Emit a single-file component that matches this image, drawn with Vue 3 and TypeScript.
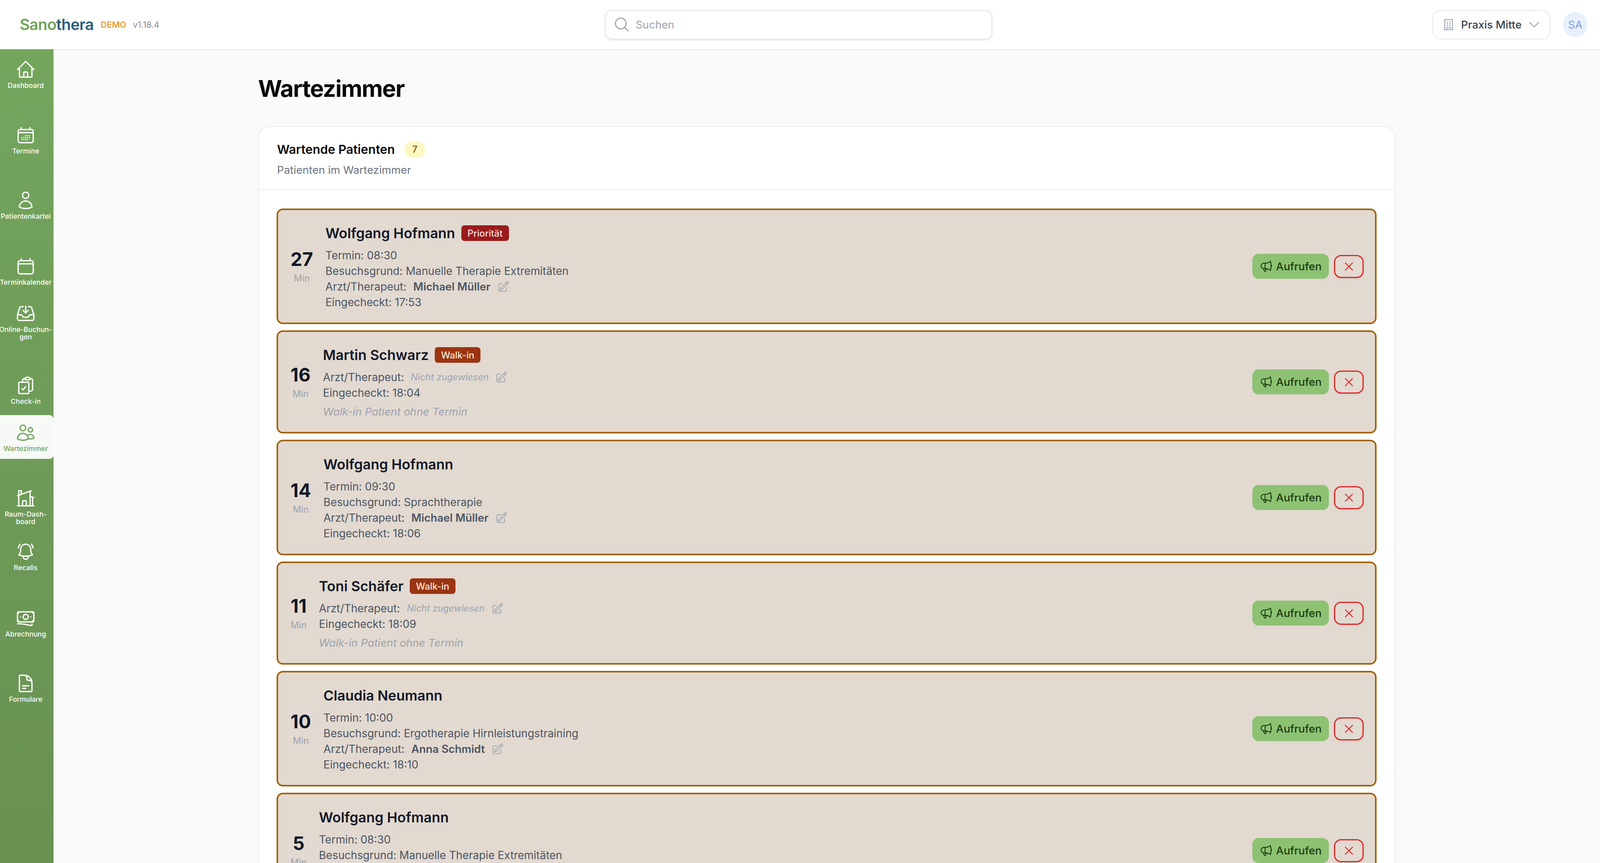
<template>
  <div class="app">
    <header class="topbar">
      <div class="brand">
        <span class="logo"><span class="logo-a">Sano</span><span class="logo-b">thera</span></span>
        <span class="demo">DEMO</span>
        <span class="version">v1.18.4</span>
      </div>
      <div class="search-wrap">
        <div class="search">
          <svg class="search-icon" viewBox="0 0 24 24" fill="none" stroke="currentColor" stroke-width="1.5" stroke-linecap="round" stroke-linejoin="round">
            <path :d="icons.search" />
          </svg>
          <span>Suchen</span>
        </div>
      </div>
      <div class="top-right">
        <div class="location">
          <svg class="loc-icon" viewBox="0 0 24 24" fill="none" stroke="currentColor" stroke-width="1.5" stroke-linecap="round" stroke-linejoin="round">
            <path :d="icons.building" />
          </svg>
          <span class="loc-name">Praxis Mitte</span>
          <svg class="chev-icon" viewBox="0 0 24 24" fill="none" stroke="currentColor" stroke-width="1.5" stroke-linecap="round" stroke-linejoin="round">
            <path :d="icons.chevron" />
          </svg>
        </div>
        <div class="avatar">SA</div>
      </div>
    </header>

    <div class="body-row">
      <nav class="sidebar">
        <div v-for="item in navItems" :key="item.label" class="nav-slot" :style="{ height: item.slot + 'px' }">
          <a class="nav-item" :class="{ active: item.active }">
            <svg class="nav-icon" viewBox="0 0 24 24" fill="none" stroke="currentColor" stroke-width="1.5" stroke-linecap="round" stroke-linejoin="round">
              <path :d="item.icon" />
            </svg>
            <span class="nav-label">{{ item.label }}</span>
          </a>
        </div>
      </nav>

      <main class="main">
        <div class="page">
          <h1>Wartezimmer</h1>
          <section class="panel">
            <div class="panel-head">
              <div class="panel-title">
                <h2>Wartende Patienten</h2>
                <span class="count">7</span>
              </div>
              <p>Patienten im Wartezimmer</p>
            </div>
            <div class="panel-body">
              <article v-for="(p, i) in patients" :key="i" class="patient">
                <div class="wait">
                  <strong>{{ p.wait }}</strong>
                  <span>Min</span>
                </div>
                <div class="info">
                  <div class="name-row">
                    <span class="name">{{ p.name }}</span>
                    <span v-if="p.badge" class="badge" :class="p.badge === 'Walk-in' ? 'walkin' : 'prio'">{{ p.badge }}</span>
                  </div>
                  <div v-if="p.termin" class="line">Termin: {{ p.termin }}</div>
                  <div v-if="p.reason" class="line">Besuchsgrund: {{ p.reason }}</div>
                  <div class="line doctor">
                    <span>Arzt/Therapeut:</span>
                    <span v-if="p.doctor" class="doc-name">{{ p.doctor }}</span>
                    <span v-else class="doc-none">Nicht zugewiesen</span>
                    <svg class="edit-icon" viewBox="0 0 24 24" fill="none" stroke="currentColor" stroke-width="1.5" stroke-linecap="round" stroke-linejoin="round">
                      <path :d="icons.edit" />
                    </svg>
                  </div>
                  <div class="line">Eingecheckt: {{ p.checkin }}</div>
                  <div v-if="!p.termin" class="note">Walk-in Patient ohne Termin</div>
                </div>
                <div class="actions">
                  <button class="call">
                    <svg class="call-icon" viewBox="0 0 24 24" fill="none" stroke="currentColor" stroke-width="1.5" stroke-linecap="round" stroke-linejoin="round">
                      <path :d="icons.megaphone" />
                    </svg>
                    Aufrufen
                  </button>
                  <button class="remove">
                    <svg class="x-icon" viewBox="0 0 24 24" fill="none" stroke="currentColor" stroke-width="1.5" stroke-linecap="round" stroke-linejoin="round">
                      <path :d="icons.close" />
                    </svg>
                  </button>
                </div>
              </article>
            </div>
          </section>
        </div>
      </main>
    </div>
  </div>
</template>

<script setup lang="ts">
const icons = {
  search: "M21 21l-5.197-5.197m0 0A7.5 7.5 0 105.196 5.196a7.5 7.5 0 0010.607 10.607z",
  building:
    "M3.75 21h16.5M4.5 3h15M5.25 3v18m13.5-18v18M9 6.75h1.5m-1.5 3h1.5m-1.5 3h1.5m3-6H15m-1.5 3H15m-1.5 3H15M9 21v-3.375c0-.621.504-1.125 1.125-1.125h3.75c.621 0 1.125.504 1.125 1.125V21",
  chevron: "M19.5 8.25l-7.5 7.5-7.5-7.5",
  edit: "M16.862 4.487l1.687-1.688a1.875 1.875 0 112.652 2.652L10.582 16.07a4.5 4.5 0 01-1.897 1.13L6 18l.8-2.685a4.5 4.5 0 011.13-1.897l8.932-8.931zm0 0L19.5 7.125M18 14v4.75A2.25 2.25 0 0115.75 21H5.25A2.25 2.25 0 013 18.75V8.25A2.25 2.25 0 015.25 6H10",
  megaphone:
    "M10.34 15.84c-.688-.06-1.386-.09-2.09-.09H7.5a4.5 4.5 0 110-9h.75c.704 0 1.402-.03 2.09-.09m0 9.18c.253.962.584 1.892.985 2.783.247.55.06 1.21-.463 1.511l-.657.38c-.551.318-1.26.117-1.527-.461a20.845 20.845 0 01-1.44-4.282m3.102.069a18.03 18.03 0 01-.59-4.59c0-1.586.205-3.124.59-4.59m0 9.18a23.848 23.848 0 018.835 2.535M10.34 6.66a23.847 23.847 0 008.835-2.535m0 0A23.74 23.74 0 0018.795 3m.38 1.125a23.91 23.91 0 011.014 5.395m-1.014 8.855c-.118.38-.245.754-.38 1.125m.38-1.125a23.91 23.91 0 001.014-5.395m0-3.46c.495.413.811 1.035.811 1.73 0 .695-.316 1.317-.811 1.73m0-3.46a24.347 24.347 0 010 3.46",
  close: "M6 18L18 6M6 6l12 12",
};

const navItems = [
  { label: "Dashboard", slot: 168, icon: "M2.25 12l8.954-8.955c.44-.439 1.152-.439 1.591 0L21.75 12M4.5 9.75v10.125c0 .621.504 1.125 1.125 1.125H9.75v-4.875c0-.621.504-1.125 1.125-1.125h2.25c.621 0 1.125.504 1.125 1.125V21h4.125c.621 0 1.125-.504 1.125-1.125V9.75M8.25 21h8.25" },
  { label: "Termine", slot: 167, icon: "M6.75 3v2.25M17.25 3v2.25M3 18.75V7.5a2.25 2.25 0 012.25-2.25h13.5A2.25 2.25 0 0121 7.5v11.25m-18 0A2.25 2.25 0 005.25 21h13.5A2.25 2.25 0 0021 18.75m-18 0v-7.5A2.25 2.25 0 015.25 9h13.5A2.25 2.25 0 0121 11.25v7.5m-9-6h.008v.008H12v-.008zM12 15h.008v.008H12V15zm0 2.25h.008v.008H12v-.008zM9.75 15h.008v.008H9.75V15zm0 2.25h.008v.008H9.75v-.008zM7.5 15h.008v.008H7.5V15zm0 2.25h.008v.008H7.5v-.008zm6.75-4.5h.008v.008h-.008v-.008zm0 2.25h.008v.008h-.008V15zm0 2.25h.008v.008h-.008v-.008zm2.25-4.5h.008v.008H16.5v-.008zm0 2.25h.008v.008H16.5V15z" },
  { label: "Patientenkartei", slot: 169, icon: "M15.75 6a3.75 3.75 0 11-7.5 0 3.75 3.75 0 017.5 0zM4.501 20.118a7.5 7.5 0 0114.998 0A17.933 17.933 0 0112 21.75c-2.676 0-5.216-.584-7.499-1.632z" },
  { label: "Terminkalender", slot: 121, icon: "M6.75 3v2.25M17.25 3v2.25M3 18.75V7.5a2.25 2.25 0 012.25-2.25h13.5A2.25 2.25 0 0121 7.5v11.25m-18 0A2.25 2.25 0 005.25 21h13.5A2.25 2.25 0 0021 18.75m-18 0v-7.5A2.25 2.25 0 015.25 9h13.5A2.25 2.25 0 0121 11.25v7.5" },
  { label: "Online-Buchun-gen", slot: 184, icon: "M9 3.75H6.912a2.25 2.25 0 00-2.15 1.588L2.35 13.177a2.25 2.25 0 00-.1.661V18a2.25 2.25 0 002.25 2.25h15A2.25 2.25 0 0021.75 18v-4.162c0-.224-.034-.447-.1-.661L19.24 5.338a2.25 2.25 0 00-2.15-1.588H15M2.25 13.5h3.86a2.25 2.25 0 012.012 1.244l.256.512a2.25 2.25 0 002.013 1.244h3.218a2.25 2.25 0 002.013-1.244l.256-.512a2.25 2.25 0 012.013-1.244h3.859M12 3v8.25m0 0l-3-3m3 3l3-3" },
  { label: "Check-in", slot: 121, icon: "M11.35 3.836c-.065.21-.1.433-.1.664 0 .414.336.75.75.75h4.5a.75.75 0 00.75-.75 2.25 2.25 0 00-.1-.664m-5.8 0A2.251 2.251 0 0113.5 2.25H15c1.012 0 1.867.668 2.15 1.586m-5.8 0c-.376.023-.75.05-1.124.08C9.095 4.01 8.25 4.973 8.25 6.108V8.25m8.9-4.414c.376.023.75.05 1.124.08 1.131.094 1.976 1.057 1.976 2.192V16.5A2.25 2.25 0 0118 18.75h-2.25m-7.5-10.5H4.875c-.621 0-1.125.504-1.125 1.125v11.25c0 .621.504 1.125 1.125 1.125h9.75c.621 0 1.125-.504 1.125-1.125V18.75m-7.5-10.5h6.375c.621 0 1.125.504 1.125 1.125v9.375m-8.25-3l1.5 1.5 3-3.75" },
  { label: "Wartezimmer", slot: 168, active: true, icon: "M15 19.128a9.38 9.38 0 002.625.372 9.337 9.337 0 004.121-.952 4.125 4.125 0 00-7.533-2.493M15 19.128v-.003c0-1.113-.285-2.16-.786-3.07M15 19.128v.106A12.318 12.318 0 018.624 21c-2.331 0-4.512-.645-6.374-1.766l-.001-.109a6.375 6.375 0 0111.964-3.07M12 6.375a3.375 3.375 0 11-6.75 0 3.375 3.375 0 016.75 0zm8.25 2.25a2.625 2.625 0 11-5.25 0 2.625 2.625 0 015.25 0z" },
  { label: "Raum-Dash-board", slot: 137, icon: "M8.25 21v-4.875c0-.621.504-1.125 1.125-1.125h2.25c.621 0 1.125.504 1.125 1.125V21m0 0h4.5V3.545M12.75 21h7.5V10.75M2.25 21h1.5m18 0h-18M2.25 9l4.5-1.636M18.75 3l-1.5.545m0 6.205l3 1m1.5.5l-1.5-.5M6.75 7.364V3h-3v18m3-13.636l10.5-3.819" },
  { label: "Recalls", slot: 170, icon: "M14.857 17.082a23.848 23.848 0 005.454-1.31A8.967 8.967 0 0118 9.75v-.7V9A6 6 0 006 9v.75a8.967 8.967 0 01-2.312 6.022c1.733.64 3.56 1.085 5.455 1.31m5.714 0a24.255 24.255 0 01-5.714 0m5.714 0a3 3 0 11-5.714 0M3.124 7.5A8.969 8.969 0 015.292 3m13.416 0a8.969 8.969 0 012.168 4.5" },
  { label: "Abrechnung", slot: 167, icon: "M2.25 18.75a60.07 60.07 0 0115.797 2.101c.727.198 1.453-.342 1.453-1.096V18.75M3.75 4.5v.75A.75.75 0 013 6h-.75m0 0v-.375c0-.621.504-1.125 1.125-1.125H20.25M2.25 6v9m18-10.5v.75c0 .414.336.75.75.75h.75m-1.5-1.5h.375c.621 0 1.125.504 1.125 1.125v9.75c0 .621-.504 1.125-1.125 1.125h-.375m1.5-1.5H21a.75.75 0 00-.75.75v.75m0 0H3.75m0 0h-.375a1.125 1.125 0 01-1.125-1.125V15m1.5 1.5v-.75A.75.75 0 003 15h-.75M15 10.5a3 3 0 11-6 0 3 3 0 016 0zm3 0h.008v.008H18V10.5zm-12 0h.008v.008H6V10.5z" },
  { label: "Formulare", slot: 150, icon: "M19.5 14.25v-2.625a3.375 3.375 0 00-3.375-3.375h-1.5A1.125 1.125 0 0113.5 7.125v-1.5a3.375 3.375 0 00-3.375-3.375H8.25m0 12.75h7.5m-7.5 3H12M10.5 2.25H5.625c-.621 0-1.125.504-1.125 1.125v17.25c0 .621.504 1.125 1.125 1.125h12.75c.621 0 1.125-.504 1.125-1.125V11.25a9 9 0 00-9-9z" },
];

type Patient = {
  wait: number;
  name: string;
  badge?: string;
  termin?: string;
  reason?: string;
  doctor?: string;
  checkin: string;
};

const patients: Patient[] = [
  { wait: 27, name: "Wolfgang Hofmann", badge: "Priorität", termin: "08:30", reason: "Manuelle Therapie Extremitäten", doctor: "Michael Müller", checkin: "17:53" },
  { wait: 16, name: "Martin Schwarz", badge: "Walk-in", checkin: "18:04" },
  { wait: 14, name: "Wolfgang Hofmann", termin: "09:30", reason: "Sprachtherapie", doctor: "Michael Müller", checkin: "18:06" },
  { wait: 11, name: "Toni Schäfer", badge: "Walk-in", checkin: "18:09" },
  { wait: 10, name: "Claudia Neumann", termin: "10:00", reason: "Ergotherapie Hirnleistungstraining", doctor: "Anna Schmidt", checkin: "18:10" },
  { wait: 5, name: "Wolfgang Hofmann", termin: "08:30", reason: "Manuelle Therapie Extremitäten", doctor: "Michael Müller", checkin: "18:15" },
];
</script>

<style>
html,
body {
  margin: 0;
  background: #fafafa;
}
</style>

<style scoped>
.app {
  height: 100vh;
  overflow: hidden;
  display: flex;
  flex-direction: column;
  font-family: Inter, "Liberation Sans", sans-serif;
  background: #fafafa;
}

.topbar {
  height: 126px;
  flex: none;
  display: flex;
  align-items: center;
  padding: 0 31.6px 0 50.4px;
  background: #fff;
  box-sizing: border-box;
}

.brand {
  width: 372.6px;
  display: flex;
  align-items: center;
  flex: none;
}

.logo {
  font-size: 39.6px;
  font-weight: 600;
  letter-spacing: -0.8px;
}

.logo-a {
  color: #72a45b;
}

.logo-b {
  color: #2b5f7a;
}

.demo {
  margin-left: 17.8px;
  font-size: 21.8px;
  font-weight: 600;
  color: #e99b35;
}

.version {
  margin-left: 16.8px;
  font-size: 21.8px;
  color: #8b8f96;
}

.search-wrap {
  flex: 1;
  display: flex;
  justify-content: center;
}

.search {
  width: 991px;
  height: 75px;
  box-sizing: border-box;
  display: flex;
  align-items: center;
  padding-left: 19px;
  gap: 13px;
  border: 2px solid #e5e5e5;
  border-radius: 18px;
  box-shadow: 0 2px 4px rgba(0, 0, 0, 0.12);
  color: #a1a1aa;
  font-size: 27.7px;
}

.search-icon {
  width: 44px;
  height: 44px;
}

.top-right {
  flex: none;
  display: flex;
  align-items: center;
  gap: 31.6px;
}

.location {
  width: 302.6px;
  height: 75px;
  box-sizing: border-box;
  display: flex;
  align-items: center;
  padding-left: 22px;
  border: 2px solid #e5e7eb;
  border-radius: 21px;
}

.loc-icon {
  width: 34.6px;
  height: 34.6px;
  color: #9ca3af;
}

.loc-name {
  margin-left: 15px;
  font-size: 27.7px;
  font-weight: 500;
  color: #374151;
}

.chev-icon {
  width: 36.6px;
  height: 36.6px;
  margin-left: 14px;
  color: #9ca3af;
}

.avatar {
  width: 63.5px;
  height: 64px;
  border-radius: 50%;
  background: #e8f0fe;
  color: #7c9cf0;
  font-size: 27.7px;
  display: flex;
  align-items: center;
  justify-content: center;
}

.body-row {
  flex: 1;
  display: flex;
  min-height: 0;
}

.sidebar {
  width: 136.5px;
  flex: none;
  box-sizing: border-box;
  padding-top: 7px;
  background: linear-gradient(180deg, #74a55d, #699152);
}

.nav-item {
  display: flex;
  flex-direction: column;
  align-items: center;
  padding: 19px 5px 16px 0;
  color: #fff;
  border-radius: 0 10px 10px 0;
}

.nav-item.active {
  background: #f7f9f6;
  color: #72a45b;
}

.nav-icon {
  width: 51.5px;
  height: 52px;
}

.nav-label {
  margin-top: 6px;
  font-size: 17.8px;
  line-height: 18.5px;
  font-weight: 500;
  text-align: center;
  width: 136px;
  flex: none;
}

.main {
  flex: 1;
  min-width: 0;
  border-top: 2px solid #e5e5e5;
  padding-top: 63.5px;
}

.page {
  width: 2911px;
  margin: 0 auto;
}

h1 {
  margin: 0 0 61.5px;
  font-size: 59.3px;
  line-height: 70px;
  letter-spacing: -1.5px;
  font-weight: 700;
  color: #0a0a0a;
}

.panel {
  background: #fff;
  border: 2px solid #ebebeb;
  border-radius: 28px;
}

.panel-head {
  padding: 34.5px 46.5px 29.5px;
  border-bottom: 2px solid #ebebeb;
}

.panel-title {
  display: flex;
  align-items: center;
  gap: 24.7px;
  height: 46px;
}

h2 {
  margin: 0;
  font-size: 31.6px;
  font-weight: 600;
  color: #0a0a0a;
}

.count {
  width: 53.4px;
  height: 40px;
  border-radius: 20px;
  background: #fef9c3;
  color: #854d0e;
  font-size: 23.7px;
  font-weight: 500;
  display: flex;
  align-items: center;
  justify-content: center;
}

.panel-head p {
  margin: 9px 0 0;
  font-size: 27.7px;
  line-height: 40px;
  color: #6b7280;
}

.panel-body {
  padding: 48px 45.5px;
  display: flex;
  flex-direction: column;
  gap: 16px;
}

.patient {
  display: flex;
  align-items: center;
  gap: 31.6px;
  padding: 32px 29.7px 32px 31.6px;
  background: #e2d9d0;
  border: 4px solid #a16207;
  border-radius: 16px;
}

.wait {
  display: flex;
  flex-direction: column;
  align-items: center;
  flex: none;
}

.wait strong {
  font-size: 47.5px;
  line-height: 62px;
  font-weight: 700;
  color: #111827;
}

.wait span {
  font-size: 23.7px;
  line-height: 36px;
  color: #9ca3af;
}

.info {
  flex: 1;
  min-width: 0;
}

.name-row {
  display: flex;
  align-items: center;
  gap: 15.8px;
  height: 54px;
  margin-bottom: 10px;
}

.name {
  font-size: 35.6px;
  font-weight: 600;
  color: #111827;
}

.badge {
  height: 40px;
  padding: 0 15.8px;
  border-radius: 8px;
  font-size: 23.7px;
  font-weight: 500;
  display: flex;
  align-items: center;
}

.prio {
  background: #991b1b;
  color: #fee2e2;
}

.walkin {
  background: #9a3412;
  color: #ffedd5;
}

.line {
  font-size: 27.8px;
  line-height: 40px;
  color: #4b5563;
}

.doctor {
  display: flex;
  align-items: center;
}

.doc-name {
  margin-left: 17.5px;
  font-weight: 600;
}

.doc-none {
  margin-left: 17.5px;
  font-size: 23.7px;
  font-style: italic;
  color: #9ca3af;
}

.edit-icon {
  width: 31.6px;
  height: 32px;
  margin-left: 17px;
  color: #9ca3af;
}

.note {
  margin-top: 8px;
  font-size: 27.7px;
  line-height: 40px;
  font-style: italic;
  color: #9ca3af;
}

.actions {
  flex: none;
  display: flex;
  align-items: center;
  gap: 13.8px;
}

.call {
  width: 195.8px;
  height: 64px;
  display: flex;
  align-items: center;
  justify-content: center;
  gap: 7px;
  border: none;
  border-radius: 16px;
  background: #8dc273;
  color: #1c3a10;
  font-family: inherit;
  font-size: 27.7px;
  font-weight: 500;
  padding: 0;
}

.call-icon {
  width: 35.6px;
  height: 36px;
}

.remove {
  width: 75.2px;
  height: 59px;
  display: flex;
  align-items: center;
  justify-content: center;
  border: 3px solid #dc2626;
  border-radius: 18px;
  background: transparent;
  color: #dc2626;
  padding: 0;
  box-shadow: 0 2px 4px rgba(0, 0, 0, 0.08);
}

.x-icon {
  width: 36.6px;
  height: 37px;
}
</style>
